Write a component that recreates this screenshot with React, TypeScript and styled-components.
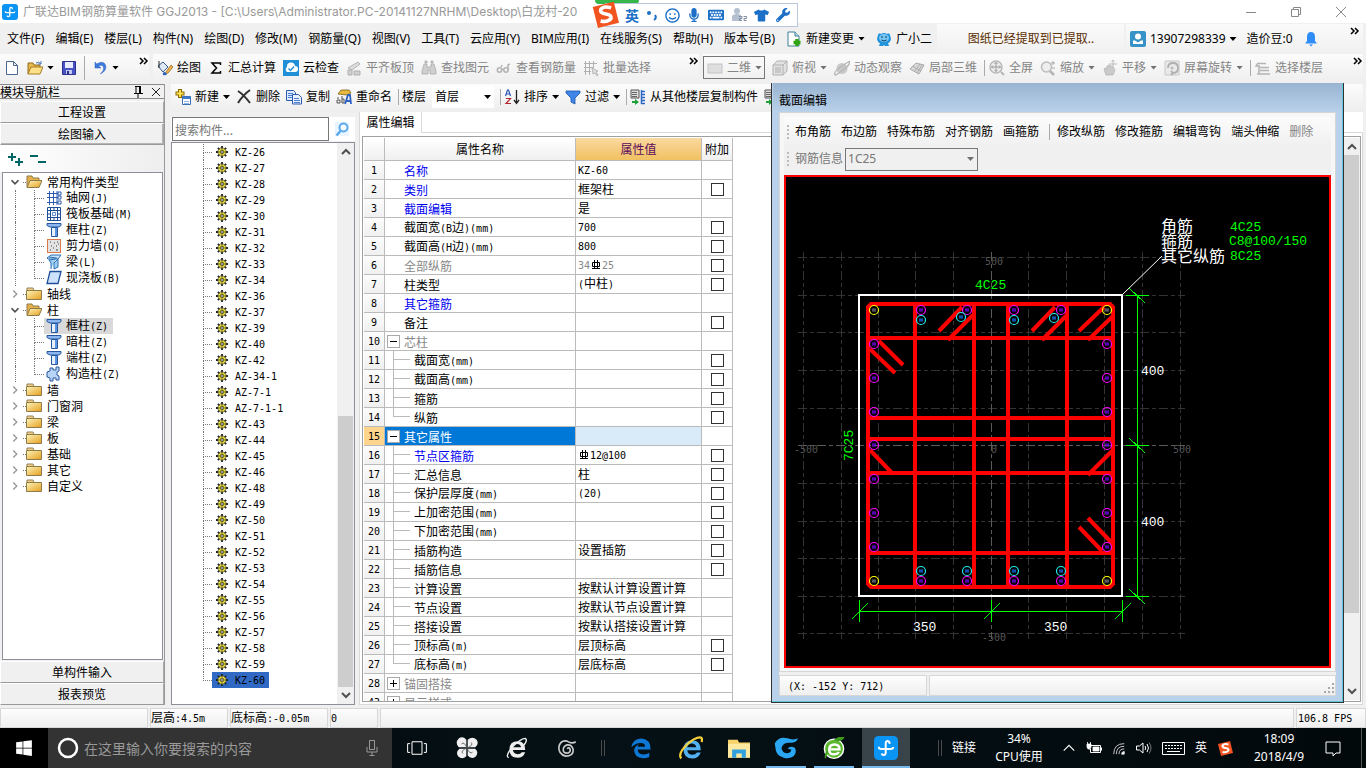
import React from 'react';
import styled, { createGlobalStyle, css } from 'styled-components';
import { FaKeyboard, FaMicrophone, FaRegSmile, FaTshirt, FaWindows, FaWrench } from 'react-icons/fa';

const GlobalStyle = createGlobalStyle`
  *, *::before, *::after { box-sizing: border-box; }
  body {
    margin: 0;
    background: #f0f0f0;
    color: #000;
    font: 12px/16px 'Noto Sans', 'Noto Sans CJK SC', sans-serif;
  }
  button, input, select {
    font: inherit;
    color: inherit;
    margin: 0;
    padding: 0;
    border: 0;
    border-radius: 0;
    background: none;
    outline: none;
  }
  svg { display: block; flex: none; }
  ul { list-style: none; margin: 0; padding: 0; }
`;

/* ---------- bitmap-style mixed text ---------- */

const SongText = styled.span`
  font: 12px/16px 'Noto Sans CJK SC', sans-serif;
  white-space: nowrap;
`;
const Half = styled.span`
  font: 10px/16px 'DejaVu Sans Mono', monospace;
  white-space: pre;
`;

function Song({ children }: { children: string }) {
  const parts = children.match(/[\x20-\x7e]+|[^\x20-\x7e]+/g) || [];
  return (
    <SongText>
      {parts.map((p, i) => (/^[\x20-\x7e]/.test(p) ? <Half key={i}>{p}</Half> : p))}
    </SongText>
  );
}

/* ---------- icons ---------- */

const shapes: Record<string, React.ReactNode> = {
  app: (
    <>
      <rect width="16" height="16" rx="3" fill="#0a95f5" />
      <path d="M10.500 5.200Q10.300 3.300 9 3.300 7.800 3.300 7.800 5v6q0 1.700-1.300 1.700-1.200 0-1.400-1M3.200 7.200q0 1.500 1.500 1.500h6.500q1.600 0 1.600-1.300" fill="none" stroke="#fff" strokeWidth="1.300" />
    </>
  ),
  fresh: <path d="M2.500 1.500h7l4 4v9h-11zM9.500 1.500v4h4" fill="#fff" stroke="#4a678f" />,
  open: (
    <>
      <path d="M1 14V3h5l1 2h6v3" fill="#e8b84b" stroke="#8f6a1c" />
      <path d="m1 14 3-7h12l-3 7z" fill="#ffdf87" stroke="#a67c22" />
      <path d="M9 3q3-2 5 1m0-3v3h-3" fill="none" stroke="#4b74b8" />
    </>
  ),
  save: (
    <>
      <path d="M1.500 1.500h13v13h-13z" fill="#4a53c4" stroke="#2b318c" />
      <path d="M4 2h8v6H4z" fill="#e9ecff" />
      <path d="M5 10h6v4H5z" fill="#c3c8ee" />
      <path d="M6 11h2v3H6z" fill="#2b318c" />
    </>
  ),
  undo: <path d="M3 2v6h6L6.500 6q4-2 5 1t-3 7q7-4 5-9T4.500 4z" fill="#3d7be0" stroke="#2a5bb5" strokeWidth=".5" />,
  draw: (
    <>
      <path d="m1 6 5-4 5 5-5 5z" fill="#dfe8f5" stroke="#3b5a86" />
      <path d="M2 1v7" stroke="#222" />
      <path d="M9 12 14 5l2 2-5 6-3 1z" fill="#f0b64e" stroke="#875c15" strokeWidth=".7" />
      <path d="M8 12q-3 0-2 3 3 1 4-1z" fill="#2f65c0" />
    </>
  ),
  sigma: <path d="M12.500 5V3H4l4.500 5L4 13h8.500v-2" fill="none" stroke="#000" strokeWidth="1.500" />,
  cloud: (
    <>
      <rect width="16" height="16" fill="#1f8fd8" />
      <path d="M4 12a3 3 0 0 1 0-5 4 4 0 0 1 8-1 3 3 0 0 1 0 6z" fill="#fff" />
      <path d="m5.500 8.500 2 2 3.500-4" fill="none" stroke="#1f8fd8" strokeWidth="1.400" />
    </>
  ),
  align: (
    <>
      <path d="m2 8 10-6 2 2-8 6z" fill="#dcdcdc" stroke="#b4b4b4" />
      <path d="M2 10h4v5H2zM8 11h6v4H8z" fill="#cfcfcf" stroke="#b0b0b0" />
    </>
  ),
  binoc: (
    <path d="M3 4h3v3h4V4h3l2 7v3H9v-4H7v4H1v-3zM4 1h2v2H4zM10 1h2v2h-2z" fill="#cfcfcf" stroke="#a5a5a5" strokeWidth=".7" />
  ),
  glasses: (
    <g fill="none" stroke="#b3b3b3" strokeWidth="1.500">
      <circle cx="3.500" cy="10" r="2.200" />
      <circle cx="10" cy="10" r="2.200" />
      <path d="M6 9.500h2M5 7l1-2M12 10V5l2-1" />
    </g>
  ),
  batch: (
    <>
      <path d="M2.500 1v14M6.500 1v14M10.500 1v7M1 3.500h13M1 7.500h9M1 11.500h7" stroke="#b0b0b0" fill="none" />
      <path d="m9 8 6 3-2 1 2 3-1 1-2-3-2 1z" fill="#ddd" stroke="#a5a5a5" strokeWidth=".7" />
    </>
  ),
  plane: <rect x="1" y="4" width="14" height="9" fill="#dedede" stroke="#c4c4c4" />,
  cube: (
    <>
      <path d="m1 5 4-4h10v10l-4 4H1z" fill="#e2e2e2" stroke="#b0b0b0" />
      <path d="M1 5h10v10M11 5l4-4" fill="none" stroke="#b0b0b0" />
      <path d="M3 7h6v6H3z" fill="#c8c8c8" />
    </>
  ),
  orbit: (
    <>
      <circle cx="8" cy="8.500" r="5.500" fill="#c9c9c9" />
      <path d="M1 15Q-1 12 8 6t7-4q2 2-6 8t-8 5z" fill="none" stroke="#b5b5b5" strokeWidth="1.300" />
    </>
  ),
  part3d: (
    <>
      <path d="m1 9 6-6 8 2-5 9z" fill="#d8d8d8" stroke="#aaa" />
      <path d="m5 12 6-8M3 6l9 5M8 13l5-8" stroke="#aaa" fill="none" />
    </>
  ),
  full: (
    <>
      <circle cx="7" cy="7" r="6" fill="#eee" stroke="#b9b9b9" strokeWidth="1.500" />
      <path d="M7 2.500v9M2.500 7h9M5.500 4 7 2.500 8.500 4M5.500 10 7 11.500 8.500 10M4 5.500 2.500 7 4 8.500M10 5.500 11.500 7 10 8.500" fill="none" stroke="#999" />
      <path d="m12 12 3 3" stroke="#b5b5b5" strokeWidth="2" />
    </>
  ),
  zoom: (
    <>
      <circle cx="6.500" cy="7" r="5" fill="#eee" stroke="#bcbcbc" strokeWidth="1.500" />
      <path d="m10 11 4 4" stroke="#b5b5b5" strokeWidth="2.500" />
      <path d="M11 3h4M13 1v4M12 8h3" stroke="#aaa" />
    </>
  ),
  pan: (
    <>
      <path d="M2 9q1-2 3 0V6l2-1 2 1 2 1 2 3-2 5H4z" fill="#cacaca" stroke="#b0b0b0" strokeWidth=".7" />
      <path d="M11 0v8M7 4h8M9.500 1.500 11 0l1.500 1.500" stroke="#bbb" fill="none" />
    </>
  ),
  rotate: (
    <>
      <path d="M1 1h14v14H1z" fill="#e9e9e9" stroke="#c9c9c9" />
      <path d="M4 8q0-5 5-5t5 5-5 5M7 11l2 2-2 2" fill="none" stroke="#b0b0b0" strokeWidth="1.800" />
      <circle cx="8" cy="8" r="1.500" fill="#bbb" />
    </>
  ),
  floors: <path d="M2 3.500h9M5 7.500h9M5 10.500h9M2 14h13M3 3l-2 3h4M4 6v8" fill="none" stroke="#b4b4b4" strokeWidth="1.500" />,
  change: (
    <>
      <path d="M2 1h7l4 4v10H2z" fill="#fff" stroke="#3f7f96" />
      <path d="M9 1v4h4" fill="#bfe3ef" stroke="#3f7f96" />
      <path d="M11 8v7M7.500 11.500h7" stroke="#2fa312" strokeWidth="3.500" />
    </>
  ),
  mascot: (
    <>
      <path d="M2 4q1-3 3-1 3-2 6 0 2-2 3 1l1 4q-1 4-3 4l1 3H9l-1-1-1 1H3l1-3q-2 0-3-4z" fill="#1f93dc" />
      <ellipse cx="8" cy="7" rx="5" ry="4" fill="#79c7f2" />
      <path d="M6 5v2M10 5v2M5.500 9q2.500 2 5 0" stroke="#083a66" fill="none" />
    </>
  ),
  user: (
    <>
      <rect width="16" height="16" rx="2" fill="#3792c7" />
      <circle cx="8" cy="5.500" r="3" fill="#fff" />
      <path d="M3 13V9.500h2l3 2 3-2h2V13z" fill="#fff" />
    </>
  ),
  bell: <path d="M8 1q4 0 4 5v4l2 2.500H2L4 10V6q0-5 4-5zM6 13.500h4L8 15.500z" fill="#2f8df5" />,
  create: (
    <>
      <path d="M5 0v9M.5 4.500h9" stroke="#8a6a00" strokeWidth="4" />
      <path d="M5 1v7M1.500 4.500h7" stroke="#ffe14d" strokeWidth="2" />
      <path d="M7.500 7.500h8v8h-8z" fill="#fff" stroke="#3d6fb5" />
      <path d="M8 8h7v2H8z" fill="#3d7bd6" />
      <path d="M9 12.500h5M9 14.500h5" stroke="#8db2e6" />
    </>
  ),
  cross: <path d="M2 2q6 4 12 12M14 1Q7 6 2 14" fill="none" stroke="#333" strokeWidth="2" />,
  copy: (
    <>
      <path d="M.5 1.500h7l2 2v8h-9z" fill="#dfeaff" stroke="#2d5cae" />
      <path d="M2 4.500h5M2 6.500h5M2 8.500h5" stroke="#4c7ed1" />
      <path d="M6.500 5.500h6l3 3v6.500h-9z" fill="#eaf1ff" stroke="#2d5cae" />
      <path d="M8 9.500h5M8 11.500h6M8 13.500h6" stroke="#4c7ed1" />
    </>
  ),
  rename: (
    <>
      <path d="m2 5 3-4h8l2 3-4 2z" fill="#e6ba3c" stroke="#80611a" strokeWidth=".8" />
      <path d="M1 11h3v3H1zM1 9h2M6 7v7h2v-4H6" fill="none" stroke="#555" />
      <path d="m9 15 3-9h2l1 9M10 12h5" fill="none" stroke="#2b62c4" strokeWidth="1.800" />
    </>
  ),
  sort: (
    <>
      <path d="m1.500 7 2-6h1l2 6M2 5h4" fill="none" stroke="#2b55b5" strokeWidth="1.200" />
      <path d="M2 9.500h4.500L2 14.500h5" fill="none" stroke="#b0282e" strokeWidth="1.200" />
      <path d="M12.500 1v12M10 11l2.500 3.500L15 11" fill="none" stroke="#222" strokeWidth="1.300" />
    </>
  ),
  filter: <path d="M1 2h14v2l-5 5v6l-4-2V9L1 4z" fill="#3f86e8" stroke="#1c54ab" strokeWidth=".8" />,
  copyFloor: (
    <>
      <path d="M1 1h8v8H1z" fill="#ddd" stroke="#555" />
      <path d="M2 3.500h5M2 5.500h5M2 7.500h5" stroke="#666" />
      <path d="M2 12h3v-2l4 3-4 3v-2H2z" fill="#1fa038" />
      <path d="M11.500 1v14M11 2.500h4M11 5.500h4M11 8.500h4M11 11.500h4M11 14.500h4" stroke="#2a66c8" strokeWidth="1.500" />
    </>
  ),
  search: (
    <>
      <rect x="1" y="1" width="14" height="14" fill="#e8f4ff" />
      <circle cx="9.500" cy="6.500" r="4" fill="#f4faff" stroke="#5aa9ea" strokeWidth="2" />
      <path d="m6.500 10-4 4.500" stroke="#5aa9ea" strokeWidth="2.500" />
    </>
  ),
  folder: (
    <>
      <path d="M1 4V2h6l1 2" fill="#f3cf7c" stroke="#8f8167" />
      <path d="M.5 4.500h15v9H.5z" fill="url(#gold)" stroke="#8f7a4a" />
    </>
  ),
  folderOpen: (
    <>
      <path d="M1 13V2h5l1 2h6v3" fill="#e6b04a" stroke="#8f7a4a" />
      <path d="m1 13.500 3-7h12l-3 7z" fill="url(#gold)" stroke="#8f7a4a" />
    </>
  ),
  grid: (
    <>
      <path d="M3.500 1v14M7.500 1v14M1 3.500h12M1 7.500h12M1 12.500h12M11 1v14" stroke="#2d5cae" fill="none" />
      <path d="M12 2h3v3h-3zM12 6h3v3h-3zM12 11h3v3h-3z" fill="#fff" stroke="#2d5cae" />
    </>
  ),
  raft: (
    <>
      <path d="M1.500 1.500h13v13h-13z" fill="#fff" stroke="#1c4f96" />
      <path d="M4.500 4.500h7v7h-7zM4.500 1v14M11.500 1v14M1 4.500h14M1 11.500h14M8 1v3M8 12v3M1 8h3M12 8h3" stroke="#1c4f96" fill="none" />
      <path d="M6.500 6.500h3v3h-3z" fill="#fff" stroke="#5c8bd0" />
    </>
  ),
  column: (
    <>
      <path d="M1 1.500h14v2l-2 1.500H4L1 3.500z" fill="#8eb6ee" stroke="#27569f" />
      <path d="M5.500 5.500h6v9h-6z" fill="#e6f0fd" stroke="#27569f" />
      <path d="M9 6h2v8H9z" fill="#5c94e2" />
    </>
  ),
  wall: (
    <>
      <path d="M1 1.500h14M1 14.500h14M1.500 1v14M14.500 1v14" stroke="#d9794a" />
      <path d="M2 2h12v12H2z" fill="#e4e4e4" />
      <path d="M4 4h1M8 5h1M11 4h1M5 8h1M10 8h1M7 10h1M4 12h1M10 12h2M12 6h1" stroke="#444" />
    </>
  ),
  beam: (
    <>
      <path d="m1 4 4-3h10l-3 4H2z" fill="#cfe7fb" stroke="#2b6fb5" />
      <path d="M5 15V9L3 6l7-1M8 15V9l4-4v8zM3 3l8 1" fill="#9dcdf3" stroke="#2b6fb5" />
    </>
  ),
  slab: <path d="M4 1.500h11l-3 12H1z" fill="#cfe2fd" stroke="#1f4f9c" strokeWidth="1.300" />,
  structural: <path d="M4 5V2h3v2h3V1h3v4l-2 1v3l2 1v4h-3v-2H7v3H4v-3L1 11V6z" fill="#b8d5f7" stroke="#27569f" />,
  gear: (
    <>
      <path d="M8 0v16M0 8h16M2.500 2.500l11 11M13.500 2.500l-11 11" stroke="#222" strokeWidth="2.500" />
      <circle cx="8" cy="8" r="5.500" fill="#f4e62e" stroke="#444" strokeWidth="1" />
      <path d="M8 3v2M8 11v2M3 8h2M11 8h2M5 5l1 1M10 10l1 1M11 5l-1 1M5 11l1-1" stroke="#333" strokeWidth="1.200" />
      <circle cx="8" cy="8" r="1.800" fill="#fff" stroke="#222" strokeWidth="1.200" />
    </>
  ),
  pluses: <path d="M5 2v8M1 6h8M12 7v8M8 11h8" stroke="#066" strokeWidth="2" fill="none" />,
  minuses: <path d="M0 5h8M8 11h8" stroke="#066" strokeWidth="2" />,
  pin: <path d="M5 2.500h6M6 2v7M9.500 2v7M10.500 2v7M4 9.500h9M8 10v4" stroke="#000" fill="none" />,
  close: <path d="m4 4 8 8M12 4l-8 8" stroke="#222" fill="none" />,
  up: <path d="m4 10 4-4 4 4" stroke="#505050" strokeWidth="2" fill="none" />,
  down: <path d="m4 6 4 4 4-4" stroke="#505050" strokeWidth="2" fill="none" />,
  right: <path d="m6 4 4 4-4 4" stroke="#a0a0a0" strokeWidth="1.800" fill="none" />,
  person: (
    <>
      <circle cx="6" cy="4" r="3" fill="#b4bfd0" />
      <path d="M1 14V10q0-3 5-3 3 0 4 1v6z" fill="#b4bfd0" />
      <path d="M8 9.500h3v2H8.500v2H11M12.500 9.500h3v2H13v2h2.500" fill="none" stroke="#7e8ca3" />
    </>
  ),
  sogou: (
    <>
      <path d="m1 4 12-3 3 12-12 3z" fill="#f2541f" />
      <path d="M11.500 4.500Q7 3 5.500 5.500 5 7.500 8.500 8q3.500.5 3 2.500Q9.500 13 5.500 12" fill="none" stroke="#fff" strokeWidth="2" />
    </>
  ),
  taskview: <path d="M4 3h8v10H4zM2.500 4.500H.5v7h2M13.500 4.500h2v7h-2" fill="none" stroke="#fff" strokeWidth=".8" />,
  pinwheel: (
    <g fill="#f0f0f0">
      <path d="M7.500 7.500H2Q-1 4 2 1q3-2 5.500 1zM8.500 7.500V2Q12-1 15 2q2 3-1 5.500zM8.500 8.500H14q3 3 0 6-3 2-5.500-1zM7.500 8.500V14q-3 3-6 0-2-3 1-5.500z" />
      <path d="M4 5q2-2 4 3M11 4q2 2-3 4M12 11q-2 2-4-3M5 12q-2-2 3-4" stroke="#555" strokeWidth=".6" fill="none" />
    </g>
  ),
  browser: (
    <>
      <path d="M14 9.500H5q.5 3 3.500 3 2 0 3-1.500h2.500q-1.500 4-5.500 4-6 0-6-6 0-6 6-6 5.500 0 5.500 6.500zM5 7.500h6Q10.500 5 8 5T5 7.500z" fill="#eee" />
      <path d="M2 15q-3-1 3-8 6-6 9-6 2 1-1 5" fill="none" stroke="#eee" />
    </>
  ),
  ie: (
    <>
      <path d="M14.500 9.500H5.500q.5 3 3.500 3 2 0 3-1.500h2.500q-1.500 4-5.500 4-6 0-6-6 0-6 6-6 5.500 0 5.500 6.500zM5.500 7.500h6Q11 5 8.500 5t-3 2.500z" fill="#53b1f0" />
      <path d="M1.500 15Q-1 12 5 6q6-5.500 9.500-5 1.500 1 .5 3" fill="none" stroke="#f3cf3a" strokeWidth="1.500" />
    </>
  ),
  edge: (
    <path
      d="M1 7.500Q2 1 8.500 1 15 1.500 15 9H5.500q.5 3.700 4.500 3.700 2.500 0 4-1.200v3Q12 15.500 9.500 15.500 3 15 3 9.500 3.500 6.500 6.500 5 5.500 6 5.500 7H11Q11 4.300 8 4.300 4 4.300 1 7.500z"
      fill="#0f78d4"
    />
  ),
  swirl: <path d="M15 3Q12 5 8 2.500 3 1.500 1.500 7 1 13 7 14.500q6 0 6-5Q12 5 8 5.500q-3 1-3 4t4 2.500q2-1 1.500-3T8 8.500" fill="none" stroke="#ccc" strokeWidth="1.300" />,
  files: (
    <>
      <path d="M0 2h7l1 2h8v11H0z" fill="#f8d36b" />
      <path d="M0 5h16v10H0z" fill="#fde9a0" />
      <path d="M3 15V9h10v6h-3v-3H6v3z" fill="#32a0dc" />
    </>
  ),
  swirlBlue: (
    <path
      d="M16 1.500Q15 4.500 11 4.500 6 4 5 8q.5 3.500 4 3.500 2.500-.5 2.500-2.500L9 8.500Q11 6 14 8q1.500 3-1 5.500-3 2-6.500 1Q1 13 1 8L.5 5Q3 0 9 1.500q4 1.500 7 0z"
      fill="#2aa6f2"
    />
  ),
  greenE: (
    <>
      <circle cx="8" cy="8.500" r="7" fill="#5cb82f" stroke="#fff" />
      <path d="M9 2q4-3 6-1.500-2 3-6 1.500zM2 15.500q-1-3 2-6" fill="#3f9a1c" stroke="#3f9a1c" />
      <path d="M5 9h7q0-3.500-3.700-3.500T4.500 9.200 8.300 12.500q2.300 0 3.300-1.500" fill="none" stroke="#fff" strokeWidth="1.800" />
    </>
  ),
  plug: (
    <>
      <path d="M5 5.500h9.500v7H4.500V9M15.500 7.500v3" fill="none" stroke="#fff" />
      <path d="M7 7h6v4H7zM1 4h4v3L4 9H2L1 7zM1.500 2v2M4.500 2v2" fill="#fff" stroke="#fff" strokeWidth=".8" />
    </>
  ),
  wifi: (
    <g fill="none" stroke="#ddd">
      <path d="M2 15Q2 3 14 3M5 15q0-9 9-9M8 15q0-6 6-6" />
      <path d="M11 15q0-3 3-3v3z" fill="#fff" />
    </g>
  ),
  speaker: (
    <g fill="none" stroke="#fff">
      <path d="M.5 6h3L7 3v10L3.500 10h-3z" />
      <path d="M9 6q1.500 2 0 4M11 4q3 4 0 8" />
      <path d="M13 2.500q4 5.500 0 11" stroke="#777" />
    </g>
  ),
  note: <path d="M1 2h14v11h-4l-3 3v-3H1z" fill="none" stroke="#fff" />,
  chevUp: <path d="m2 11 6-6 6 6" fill="none" stroke="#fff" strokeWidth="1.300" />,
};

function Icon({ name, size = 16 }: { name: string; size?: number }) {
  return (
    <svg width={size} height={size} viewBox="0 0 16 16" aria-hidden="true">
      {shapes[name]}
    </svg>
  );
}

const Caret = styled.span<{ $dim?: boolean }>`
  flex: none;
  width: 7px;
  height: 4px;
  background: ${(p) => (p.$dim ? '#707070' : '#000')};
  clip-path: polygon(0 0, 100% 0, 50% 100%);
`;

function More() {
  return (
    <svg width="10" height="8" viewBox="0 0 10 8" aria-hidden="true">
      <path d="m1 1 3 3-3 3M5 1l3 3-3 3" fill="none" stroke="#000" strokeWidth="1.500" />
    </svg>
  );
}

/* ---------- window chrome ---------- */

const Page = styled.div`
  display: flex;
  flex-direction: column;
  height: 100vh;
  min-height: 760px;
  overflow: hidden;
  position: relative;
`;
const TitleBar = styled.header`
  flex: none;
  display: flex;
  align-items: center;
  height: 23px;
  padding: 0 17px 0 2px;
  gap: 5px;
  background: #fff;
  color: #999;
`;
const WindowTitle = styled.span`
  font-family: Inter, 'Noto Sans CJK SC', sans-serif;
  white-space: nowrap;
`;
const WindowButtons = styled.div`
  display: flex;
  gap: 29px;
  margin-left: auto;
`;
const PlainButton = styled.button`
  display: flex;
  align-items: center;
`;

const MenuBar = styled.nav`
  flex: none;
  display: flex;
  height: 31px;
  gap: 2px;
  padding-right: 3px;
`;
const MenuItems = styled.div`
  display: flex;
  align-items: center;
  gap: 11px;
  padding-left: 7px;
  width: 935px;
  white-space: nowrap;
`;
const MenuBand = styled.div<{ $grow?: boolean }>`
  display: flex;
  align-items: center;
  justify-content: ${(p) => (p.$grow ? 'flex-start' : 'center')};
  flex: ${(p) => (p.$grow ? '1' : '0 0 187px')};
  gap: 10px;
  margin-top: 1px;
  padding: 0 3px 0 4px;
  white-space: nowrap;
  background: linear-gradient(#fafafa, #f0f0f0);
`;
const Notice = styled.a`
  color: #5a2d00;
  text-decoration: none;
`;
const MoreButton = styled.button`
  align-self: flex-start;
  margin: 3px 0 0 auto;
`;

const ToolBar = styled.div`
  flex: none;
  display: flex;
  height: 29px;
  gap: 4px;
  padding-right: 3px;
`;
const ToolSection = styled.div<{ $w?: number; $tight?: boolean; $flush?: boolean }>`
  display: flex;
  align-items: center;
  gap: ${(p) => (p.$tight ? 6 : 7)}px;
  flex: ${(p) => (p.$w ? `0 0 ${p.$w}px` : '1')};
  padding: 0 0 2px ${(p) => (p.$flush ? 0 : 4)}px;
  white-space: nowrap;
  background: linear-gradient(#fcfcfc, #eee);
`;
const ToolButton = styled.button<{ $dim?: boolean }>`
  display: flex;
  align-items: center;
  gap: 4px;
  white-space: nowrap;
  color: ${(p) => (p.$dim ? '#858585' : '#000')};
`;
const Separator = styled.span<{ $tall?: boolean }>`
  flex: none;
  width: 1px;
  height: ${(p) => (p.$tall ? 24 : 16)}px;
  margin-right: ${(p) => (p.$tall ? 0 : -3)}px;
  background: #aaa;
`;
const ViewCombo = styled(ToolButton)`
  width: 62px;
  height: 23px;
  padding: 0 3px;
  border: 1px solid #777;
`;

/* ---------- left navigation ---------- */

const Main = styled.main`
  flex: 1;
  min-height: 0;
  display: flex;
  gap: 6px;
  padding: 1px 3px 3px 0;
`;
const NavPanel = styled.aside`
  flex: none;
  width: 165px;
  display: flex;
  flex-direction: column;
  border-right: 1px solid #999;
`;
const NavHeader = styled.div`
  display: flex;
  align-items: center;
  height: 15px;
  border: 1px solid #8a8a8a;
  border-width: 1px 0;
  margin-bottom: 2px;
`;
const NavTools = styled.div`
  display: flex;
  gap: 2px;
  margin-left: auto;
`;
const NavButton = styled.button<{ $on?: boolean }>`
  height: 22px;
  text-align: center;
  background: #f0f0f0;
  border: 1px solid;
  border-color: #fff #a8a8a8 #999 #fff;
  ${(p) => p.$on && css`box-shadow: inset -1px -1px #b5b5b5;`}
`;
const NavStrip = styled.div`
  display: flex;
  align-items: center;
  gap: 7px;
  height: 27px;
  padding-left: 7px;
  background: linear-gradient(90deg, #fff, #eee);
`;
const Tree = styled.ul`
  flex: 1;
  min-height: 0;
  overflow: hidden;
  margin: 0 1px 1px 2px;
  padding: 1px 0 0 5px;
  border: 1px solid #8a8f98;
  background: #fff;
`;
const TreeRow = styled.li`
  display: flex;
  align-items: center;
  height: 16px;
`;
const Dots = styled.span`
  width: 3px;
  margin-left: 1px;
  border-top: 1px dotted #777;
`;
const RootLabel = styled.span`
  display: flex;
  gap: 5px;
`;
const RootGuide = styled.span`
  width: 19px;
  height: 16px;
  margin-left: 7px;
  border-left: 1px dotted #777;
`;
const Elbow = styled.span<{ $w: number; $last?: boolean }>`
  flex: none;
  display: grid;
  grid-template-rows: 9px 1fr;
  width: ${(p) => p.$w}px;
  height: 100%;
  &::before {
    content: '';
    border: 0 dotted #777;
    border-width: 0 0 1px 1px;
  }
  &::after {
    content: '';
    border: 0 dotted #777;
    border-left-width: ${(p) => (p.$last ? 0 : 1)}px;
  }
`;
const Leaf = styled.span<{ $on?: boolean }>`
  display: flex;
  align-items: center;
  gap: 4px;
  height: 16px;
  padding: 0 5px 0 2px;
  background: ${(p) => (p.$on ? '#d9d9d9' : 'none')};
`;

/* ---------- component list ---------- */

const Workspace = styled.section`
  flex: 1;
  min-width: 0;
  display: flex;
  flex-direction: column;
`;
const ComponentBar = styled(ToolBar)`
  height: 28px;
  gap: 0;
  padding: 0;
`;
const FloorSelect = styled.span`
  display: flex;
  align-items: center;
  width: 62px;
  height: 22px;
  padding: 0 3px;
  background: #fff;
`;
const BareSelect = styled.select`
  flex: 1;
  min-width: 0;
  appearance: none;
  opacity: 1;
`;
const Panels = styled.div`
  flex: 1;
  min-height: 0;
  display: flex;
  gap: 4px;
`;
const ListPanel = styled.div`
  flex: none;
  width: 184px;
  display: flex;
  flex-direction: column;
  padding-top: 5px;
`;
const SearchRow = styled.div`
  display: flex;
  align-items: center;
  gap: 5px;
  height: 24px;
  margin-bottom: 1px;
  padding-left: 1px;
  background: #fff;
`;
const SearchInput = styled.input`
  width: 157px;
  height: 24px;
  padding: 0 2px;
  border: 1px solid #777;
  background: #fff;
  font: 12px/16px 'Noto Sans CJK SC', sans-serif;
  &::placeholder {
    color: #777;
    opacity: 1;
  }
`;
const ListBox = styled.div`
  flex: 1;
  min-height: 0;
  display: flex;
  border: 1px solid #8a8f98;
  background: #fff;
`;
const ListItems = styled.ul`
  flex: 1;
  overflow: hidden;
  padding: 1px 0 0 31px;
`;
const ListLeaf = styled(Leaf)`
  gap: 7px;
  padding: 0 4px;
  background: ${(p) => (p.$on ? '#316ac5' : 'none')};
`;
const Scrollbar = styled.div`
  flex: none;
  display: flex;
  flex-direction: column;
  width: 17px;
  padding: 1px;
  background: #f0f0f0;
`;
const ScrollSpace = styled.span<{ $flex: number; $thumb?: boolean }>`
  flex: ${(p) => p.$flex} 0 0;
  background: ${(p) => (p.$thumb ? '#cdcdcd' : 'none')};
`;

/* ---------- property editor ---------- */

const Editor = styled.div`
  flex: 1;
  min-width: 0;
  display: flex;
  flex-direction: column;
`;
const TabStrip = styled.div`
  display: flex;
  height: 21px;
  background: #fff;
`;
const Tab = styled.button`
  width: 63px;
  border: 1px solid #d9d9d9;
  border-width: 0 1px 0 1px;
`;
const TabRest = styled.span`
  flex: 1;
  border-bottom: 1px solid #d9d9d9;
`;
const EditorBody = styled.div`
  flex: 1;
  min-height: 0;
  display: flex;
  padding: 3px 1px 2px 2px;
  border: 1px solid #d9d9d9;
  border-top: 0;
  background: #fff;
`;
const EditorFrame = styled.div`
  flex: 1;
  min-width: 0;
  display: flex;
  justify-content: space-between;
  overflow: hidden;
  padding: 1px 0 1px 1px;
  border: 1px solid #a0a0a0;
`;
const Table = styled.table`
  align-self: flex-start;
  table-layout: fixed;
  width: 369px;
  border-spacing: 0;
`;
const Th = styled.th<{ $w: number; $on?: boolean }>`
  width: ${(p) => p.$w}px;
  height: 23px;
  padding: 0;
  font-weight: 400;
  border: 0 solid #bbb;
  border-width: 0 1px 1px 0;
  color: ${(p) => (p.$on ? '#5c0a5c' : '#000')};
  background: ${(p) => (p.$on ? 'linear-gradient(#fad9a0, #f1c161)' : 'linear-gradient(#fff, #f0f0f0)')};
`;
const Td = styled.td<{ $bg?: string; $center?: boolean }>`
  height: 19px;
  padding: 0;
  text-align: ${(p) => (p.$center ? 'center' : 'left')};
  line-height: 16px;
  border: 0 solid #bbb;
  border-width: 0 1px 1px 0;
  background: ${(p) => p.$bg || '#fff'};
`;
const NameCell = styled.div<{ $tone?: string }>`
  display: flex;
  align-items: center;
  height: 18px;
  padding-left: 2px;
  color: ${(p) => p.$tone || '#000'};
`;
const NameText = styled.span`
  padding-top: 2px;
  line-height: 16px;
`;
const Toggle = styled.button`
  width: 13px;
  height: 13px;
  margin-right: 4px;
  border: 1px solid #aaa;
  background: #fff;
  color: #000;
`;
const Indent = styled.span`
  width: 17px;
`;
const Branch = styled(Elbow)`
  margin: 0 4px 0 6px;
  height: 19px;
  &::before, &::after {
    border-style: solid;
    border-color: #bbb;
  }
`;
const ValueCell = styled.div<{ $dim?: boolean }>`
  display: flex;
  align-items: center;
  height: 18px;
  padding-left: 2px;
  color: ${(p) => (p.$dim ? '#888' : '#000')};
`;
const Check = styled.input`
  appearance: none;
  display: block;
  width: 13px;
  height: 13px;
  margin: 0 auto;
  border: 1px solid #333;
  background: #fff;
`;

/* ---------- section dialog ---------- */

const Dialog = styled.section`
  position: absolute;
  top: 83px;
  right: 22px;
  width: 573px;
  height: 620px;
  display: flex;
  flex-direction: column;
  padding: 0 7px 6px;
  border: 1px solid #333;
  border-top: 0;
  background: #b9d1ea;
  box-shadow: inset -1px -1px #5fc8dc;
`;
const DialogTitle = styled.h2`
  flex: none;
  margin: 0 -6px;
  padding: 9px 6px 4px;
  font: 12px/16px 'Noto Sans CJK SC', sans-serif;
  background: linear-gradient(#99b4d1, #b9d1ea);
`;
const DialogBody = styled.div`
  flex: 1;
  min-height: 0;
  display: flex;
  flex-direction: column;
  padding: 4px 4px 3px;
  border: 1px solid #d5d5d5;
  background: #f7f7f7;
`;
const DialogBar = styled.div`
  flex: none;
  display: flex;
  align-items: center;
  gap: 10px;
  height: 29px;
  padding-left: 3px;
  white-space: nowrap;
  background: linear-gradient(#fcfcfc, #f0f0f0);
`;
const DialogInfo = styled(DialogBar)`
  gap: 0;
  padding-bottom: 3px;
  color: #777;
  background: #f0f0f0;
`;
const Grip = styled.span`
  width: 2px;
  height: 14px;
  margin-right: -4px;
  background: repeating-linear-gradient(#bbb 0 2px, transparent 2px 4px);
`;
const InfoLabel = styled.label`
  padding: 0 2px 0 10px;
`;
const InfoCombo = styled.span`
  display: flex;
  align-items: center;
  width: 133px;
  height: 23px;
  padding: 0 3px 0 2px;
  border: 1px solid #777;
`;
const CanvasFrame = styled.div`
  flex: 1;
  min-height: 0;
  border: 2px solid #f00;
  background: #000;
  overflow: hidden;
`;
const DialogStatus = styled.div`
  flex: none;
  display: flex;
  gap: 2px;
  height: 24px;
  padding-top: 3px;
  background: #f0f0f0;
`;
const StatusCell = styled.div<{ $w?: number; $pad?: number }>`
  flex: ${(p) => (p.$w ? `0 0 ${p.$w}px` : '1')};
  display: flex;
  align-items: center;
  padding-left: ${(p) => p.$pad || 0}px;
  border: 1px solid #d7d7d7;
  background: linear-gradient(#fdfdfd, #efefef);
`;
const ResizeGrip = styled.svg`
  align-self: flex-end;
  margin-left: auto;
`;

/* ---------- bottom bars ---------- */

const StatusBar = styled.footer`
  flex: none;
  display: flex;
  gap: 2px;
  height: 20px;
`;
const TaskBar = styled.footer`
  flex: none;
  display: flex;
  height: 40px;
  color: #fff;
  background: linear-gradient(90deg, #02090b, #051116 45%, #02090b);
`;
const StartButton = styled.button`
  width: 48px;
  display: grid;
  place-items: center;
  background: #000;
`;
const TaskSearch = styled.label`
  display: flex;
  align-items: center;
  gap: 5px;
  width: 344px;
  padding: 0 14px 0 9px;
  background: #333;
  color: #999;
`;
const TaskInput = styled.input`
  flex: 1;
  min-width: 0;
  font: 14px/20px 'Noto Sans CJK SC', sans-serif;
  &::placeholder {
    color: #999;
    opacity: 1;
  }
`;
const TaskTile = styled.button<{ $w?: number; $open?: boolean; $on?: boolean }>`
  display: grid;
  place-items: center;
  width: ${(p) => p.$w || 50}px;
  background: ${(p) => (p.$on ? '#39444a' : 'none')};
  ${(p) => p.$open && css`
    border-bottom: 2px solid #76b9ed;
    padding-top: 2px;
  `}
`;
const OpenTiles = styled.div`
  display: flex;
  gap: 8px;
  padding-left: 2px;
`;
const Rule = styled.span`
  width: 4px;
  height: 16px;
  margin: auto 0;
  border: 1px solid #4a4a4a;
  border-width: 0 1px;
`;
const Tray = styled.div`
  display: flex;
  align-items: center;
  margin-left: auto;
  gap: 10px;
  padding-right: 4px;
  white-space: nowrap;
`;
const TrayText = styled.span<{ $w?: number }>`
  width: ${(p) => (p.$w ? `${p.$w}px` : 'auto')};
  text-align: center;
  line-height: 18px;
  white-space: pre;
`;
const DesktopEdge = styled.span`
  width: 1px;
  height: 40px;
  margin-left: 10px;
  background: #555;
`;

/* ---------- floating input-method bar ---------- */

const ImeBar = styled.div`
  position: absolute;
  top: 3px;
  left: 605px;
  display: flex;
  align-items: center;
  gap: 7px;
  width: 193px;
  height: 24px;
  padding-left: 19px;
  border: 1px solid #b9c6dc;
  background: #fff;
  color: #1c70c8;
`;
const ImeLogo = styled.span`
  position: absolute;
  top: -4px;
  left: -15px;
`;
const ImeText = styled.b`
  font: 700 14px/16px 'Noto Sans CJK SC', sans-serif;
`;
const GreenBall = styled.span`
  position: absolute;
  top: 0;
  left: 595px;
  width: 44px;
  height: 4px;
  border-radius: 0 0 20px 20px;
  background: #35b54a;
`;

/* ---------- data ---------- */

const menus = [
  '文件(F)', '编辑(E)', '楼层(L)', '构件(N)', '绘图(D)', '修改(M)', '钢筋量(Q)', '视图(V)',
  '工具(T)', '云应用(Y)', 'BIM应用(I)', '在线服务(S)', '帮助(H)', '版本号(B)',
];

type Node = { label: string; icon?: string; open?: boolean; kids?: [string, string, boolean?][] };
const tree: Node[] = [
  {
    label: '常用构件类型',
    open: true,
    kids: [
      ['轴网(J)', 'grid'], ['筏板基础(M)', 'raft'], ['框柱(Z)', 'column'],
      ['剪力墙(Q)', 'wall'], ['梁(L)', 'beam'], ['现浇板(B)', 'slab'],
    ],
  },
  { label: '轴线' },
  {
    label: '柱',
    open: true,
    kids: [['框柱(Z)', 'column', true], ['暗柱(Z)', 'column'], ['端柱(Z)', 'column'], ['构造柱(Z)', 'structural']],
  },
  { label: '墙' }, { label: '门窗洞' }, { label: '梁' }, { label: '板' },
  { label: '基础' }, { label: '其它' }, { label: '自定义' },
];

const components = (
  'KZ-26 KZ-27 KZ-28 KZ-29 KZ-30 KZ-31 KZ-32 KZ-33 KZ-34 KZ-36 KZ-37 KZ-39 KZ-40 KZ-42 AZ-34-1 AZ-7-1 AZ-7-1-1 ' +
  'KZ-43 KZ-44 KZ-45 KZ-46 KZ-48 KZ-49 KZ-50 KZ-51 KZ-52 KZ-53 KZ-54 KZ-55 KZ-56 KZ-57 KZ-58 KZ-59 KZ-60'
).split(' ');

type Prop = { n: number; name: string; value?: string; check?: boolean; tone?: string; kind?: 'open' | 'shut' | 'kid' | 'last' };
const BLUE = '#0000f0';
const GREY = '#888';
const props: Prop[] = [
  { n: 1, name: '名称', value: 'KZ-60', tone: BLUE },
  { n: 2, name: '类别', value: '框架柱', tone: BLUE, check: true },
  { n: 3, name: '截面编辑', value: '是', tone: BLUE },
  { n: 4, name: '截面宽(B边)(mm)', value: '700', check: true },
  { n: 5, name: '截面高(H边)(mm)', value: '800', check: true },
  { n: 6, name: '全部纵筋', value: '34#25', tone: GREY, check: true },
  { n: 7, name: '柱类型', value: '(中柱)', check: true },
  { n: 8, name: '其它箍筋', tone: BLUE },
  { n: 9, name: '备注', check: true },
  { n: 10, name: '芯柱', tone: GREY, kind: 'open' },
  { n: 11, name: '截面宽(mm)', check: true, kind: 'kid' },
  { n: 12, name: '截面高(mm)', check: true, kind: 'kid' },
  { n: 13, name: '箍筋', check: true, kind: 'kid' },
  { n: 14, name: '纵筋', check: true, kind: 'last' },
  { n: 15, name: '其它属性', tone: '#fff', kind: 'open' },
  { n: 16, name: '节点区箍筋', value: '#12@100', tone: BLUE, check: true, kind: 'kid' },
  { n: 17, name: '汇总信息', value: '柱', check: true, kind: 'kid' },
  { n: 18, name: '保护层厚度(mm)', value: '(20)', check: true, kind: 'kid' },
  { n: 19, name: '上加密范围(mm)', check: true, kind: 'kid' },
  { n: 20, name: '下加密范围(mm)', check: true, kind: 'kid' },
  { n: 21, name: '插筋构造', value: '设置插筋', check: true, kind: 'kid' },
  { n: 22, name: '插筋信息', check: true, kind: 'kid' },
  { n: 23, name: '计算设置', value: '按默认计算设置计算', kind: 'kid' },
  { n: 24, name: '节点设置', value: '按默认节点设置计算', kind: 'kid' },
  { n: 25, name: '搭接设置', value: '按默认搭接设置计算', kind: 'kid' },
  { n: 26, name: '顶标高(m)', value: '层顶标高', check: true, kind: 'kid' },
  { n: 27, name: '底标高(m)', value: '层底标高', check: true, kind: 'last' },
  { n: 28, name: '锚固搭接', tone: GREY, kind: 'shut' },
  { n: 43, name: '显示样式', tone: GREY, kind: 'shut' },
];

/* Steel grade mark that precedes a bar diameter. */
function GradeMark() {
  return (
    <svg width="12" height="12" viewBox="0 0 12 12" aria-label="三级钢">
      <path d="M2.500 3.500h7v4h-7zM4.500 1v9M7.500 1v9M2 9.500h8" fill="none" stroke="#000" />
    </svg>
  );
}

function Value({ text }: { text: string }) {
  const [before, after] = text.split('#');
  if (after === undefined) return <Song>{text}</Song>;
  return (
    <>
      {before && <Song>{before}</Song>}
      <GradeMark />
      <Song>{after}</Song>
    </>
  );
}

/* ---------- section drawing ---------- */

const gridX = [803, 841, 878, 915, 953, 1028, 1066, 1104, 1142, 1180];
const gridY = [257, 295, 332, 370, 408, 483, 521, 558, 596, 633];
const barX = [921, 967, 1014, 1061];
const sideY = [344, 378, 412, 445, 479, 513, 547];
const hooks = [
  [962, 307, 939, 331], [973, 315, 948, 340], [1055, 307, 1032, 331], [1066, 316, 1042, 340],
  [1104, 307, 1079, 331], [1112, 317, 1088, 340], [879, 341, 903, 365], [870, 349, 895, 373],
  [870, 450, 893, 474], [1112, 451, 1088, 475], [1088, 518, 1112, 543], [1079, 527, 1102, 551],
];

function Bar({ x, y, c }: { x: number; y: number; c: string }) {
  return (
    <g>
      <circle cx={x} cy={y} r="4.500" fill="none" stroke={c} strokeWidth="1.200" />
      <rect x={x - 2} y={y - 1.5} width="4" height="3" fill={c} opacity=".55" />
      <path d={`M${x - 1} ${y - 1.5}v3M${x + 1} ${y - 1.5}v3`} stroke="#00f" strokeWidth=".8" />
    </g>
  );
}

const mono = "'Liberation Mono', monospace";
const cjk = "'Noto Sans CJK SC', sans-serif";

function SectionDrawing() {
  return (
    <svg width="543" height="489" viewBox="786 177 543 489">
      <g stroke="#333" strokeDasharray="9 3 4 3" shapeRendering="crispEdges">
        {gridX.map((x) => <path key={x} d={`M${x + 0.5} 252V639`} />)}
        {gridY.map((y) => <path key={y} d={`M798 ${y + 0.5}H1185`} />)}
        <path d="M991.500 252V639M798 445.500H1185" stroke="#5a5a5a" />
      </g>
      <g fill="#555" fontFamily="'DejaVu Sans Mono', monospace" fontSize="10">
        <text x="985" y="265">500</text>
        <text x="794" y="453">-500</text>
        <text x="991" y="453">0</text>
        <text x="1173" y="453">500</text>
        <text x="982" y="641">-500</text>
      </g>
      <rect x="859" y="295" width="263" height="301" fill="none" stroke="#fff" strokeWidth="2" />
      <path d="M1122 295 1162 256" stroke="#fff" />
      <g fill="none" stroke="#f00" strokeWidth="4">
        <path d="M871 304H1110L1113 307V584L1110 587H871L868 584V307Z" />
        <path d="M915 304V587M974 304V587M1008 304V587M1067 304V587" />
        <path d="M868 338H1113M868 418H1113M868 439H1113M868 473H1113M868 553H1113" />
        {hooks.map(([a, b, c, d]) => <path key={`${a}-${b}`} d={`M${a} ${b}L${c} ${d}`} />)}
      </g>
      {[874, 1107].map((x) => [310, 581].map((y) => <Bar key={`${x}${y}`} x={x} y={y} c="#ff0" />))}
      {barX.map((x) => (
        <g key={x}>
          <Bar x={x} y={310} c="#f0f" />
          <Bar x={x} y={581} c="#f0f" />
          <Bar x={x} y={571} c="#2ee" />
        </g>
      ))}
      {[[921, 320], [961, 317], [1014, 320], [1054, 318]].map(([x, y]) => <Bar key={x} x={x} y={y} c="#2ee" />)}
      {sideY.map((y) => (
        <g key={y}>
          <Bar x={874} y={y} c="#f0f" />
          <Bar x={1107} y={y} c="#f0f" />
        </g>
      ))}
      <g stroke="#0f0" fill="none" shapeRendering="crispEdges">
        <path d="M1137.500 295V596" />
        <path d="M1126 295.500h23M1126 445.500h23M1126 596.500h23" />
        <path d="m1129 288 16 15M1129 438l16 15M1129 589l16 15" />
        <path d="M859 611.500H1122M859.500 600v22M991.500 600v22M1122.500 600v22" />
        <path d="m852 619 16-16M984 619l16-16M1115 619l16-16" />
      </g>
      <g fill="#fff" fontFamily={cjk} fontSize="16">
        <text x="1161" y="232">角筋</text>
        <text x="1161" y="247">箍筋</text>
        <text x="1161" y="262">其它纵筋</text>
      </g>
      <g fill="#fff" fontFamily={mono} fontSize="13">
        <text x="1141" y="375">400</text>
        <text x="1141" y="526">400</text>
        <text x="913" y="631">350</text>
        <text x="1044" y="631">350</text>
      </g>
      <g fill="#0f0" fontFamily={mono} fontSize="13">
        <text x="1230" y="231">4C25</text>
        <text x="1229" y="245">C8@100/150</text>
        <text x="1230" y="260">8C25</text>
        <text x="975" y="289">4C25</text>
        <text transform="translate(853 461) rotate(-90)">7C25</text>
      </g>
    </svg>
  );
}

/* ---------- parts ---------- */

function Tool({ icon, label, caret, dim }: { icon: string; label?: string; caret?: boolean; dim?: boolean }) {
  return (
    <ToolButton $dim={dim} aria-label={label || icon}>
      <Icon name={icon} />
      {label}
      {caret && <Caret $dim={dim} />}
    </ToolButton>
  );
}

function NavTree() {
  return (
    <Tree>
      {tree.map((node, i) => (
        <React.Fragment key={node.label + i}>
          <TreeRow>
            <Icon name={node.open ? 'down' : 'right'} size={14} />
            <Dots />
            <RootLabel>
              <Icon name={node.open ? 'folderOpen' : 'folder'} />
              <Song>{node.label}</Song>
            </RootLabel>
          </TreeRow>
          {node.kids?.map(([label, icon, on], k) => (
            <TreeRow key={label}>
              <RootGuide />
              <Elbow $w={10} $last={k === node.kids!.length - 1} />
              <Leaf $on={on}>
                <Icon name={icon} />
                <Song>{label}</Song>
              </Leaf>
            </TreeRow>
          ))}
        </React.Fragment>
      ))}
    </Tree>
  );
}

function PropertyTable() {
  return (
    <Table>
      <thead>
        <tr>
          <Th $w={21} aria-label="序号" />
          <Th $w={191}><Song>属性名称</Song></Th>
          <Th $w={126} $on><Song>属性值</Song></Th>
          <Th $w={31}><Song>附加</Song></Th>
        </tr>
      </thead>
      <tbody>
        {props.map((p) => {
          const on = p.n === 15;
          return (
            <tr key={p.n}>
              <Td $center $bg={on ? '#ffd58c' : 'linear-gradient(#fcfcfc, #f0f0f0)'}><Song>{String(p.n)}</Song></Td>
              <Td $bg={on ? '#0078d7' : undefined}>
                <NameCell $tone={p.tone}>
                  {(p.kind === 'open' || p.kind === 'shut') && (
                    <Toggle aria-label={p.kind === 'open' ? '折叠' : '展开'}>
                      <svg width="11" height="11" viewBox="0 0 11 11">
                        <path d={p.kind === 'open' ? 'M2 5.500h7' : 'M2 5.500h7M5.500 2v7'} stroke="#000" />
                      </svg>
                    </Toggle>
                  )}
                  {(p.kind === 'kid' || p.kind === 'last') && <Branch $w={17} $last={p.kind === 'last'} />}
                  {!p.kind && <Indent />}
                  <NameText><Song>{p.name}</Song></NameText>
                </NameCell>
              </Td>
              <Td $bg={on ? '#d9eaf8' : undefined}>
                <ValueCell $dim={p.n === 6}>{p.value && <Value text={p.value} />}</ValueCell>
              </Td>
              <Td $center>{p.check && <Check type="checkbox" aria-label={`附加 ${p.name}`} />}</Td>
            </tr>
          );
        })}
      </tbody>
    </Table>
  );
}

function SectionDialog() {
  return (
    <Dialog>
      <DialogTitle>截面编辑</DialogTitle>
      <DialogBody>
        <DialogBar>
          <Grip />
          {['布角筋', '布边筋', '特殊布筋', '对齐钢筋', '画箍筋'].map((t) => <ToolButton key={t}>{t}</ToolButton>)}
          <Separator />
          {['修改纵筋', '修改箍筋', '编辑弯钩', '端头伸缩'].map((t) => <ToolButton key={t}>{t}</ToolButton>)}
          <ToolButton $dim>删除</ToolButton>
        </DialogBar>
        <DialogInfo>
          <Grip />
          <InfoLabel htmlFor="rebar">钢筋信息</InfoLabel>
          <InfoCombo>
            <BareSelect id="rebar" defaultValue="1C25"><option>1C25</option></BareSelect>
            <Caret $dim />
          </InfoCombo>
        </DialogInfo>
        <CanvasFrame><SectionDrawing /></CanvasFrame>
      </DialogBody>
      <DialogStatus>
        <StatusCell $w={148} $pad={8}><Song>(X: -152 Y: 712)</Song></StatusCell>
        <StatusCell>
          <ResizeGrip width="12" height="12" viewBox="0 0 12 12">
            <path d="M9 1h2M5 5h2M9 5h2M1 9h2M5 9h2M9 9h2" stroke="#aaa" strokeWidth="2" />
          </ResizeGrip>
        </StatusCell>
      </DialogStatus>
    </Dialog>
  );
}

export default function App() {
  return (
    <Page>
      <GlobalStyle />
      <svg width="0" height="0" style={{ position: 'absolute' }}>
        <linearGradient id="gold" x1="0" y1="0" x2="1" y2="1">
          <stop offset="0" stopColor="#fff3b8" />
          <stop offset="1" stopColor="#e3a021" />
        </linearGradient>
      </svg>

      <TitleBar>
        <Icon name="app" />
        <WindowTitle>广联达BIM钢筋算量软件 GGJ2013 - [C:\Users\Administrator.PC-20141127NRHM\Desktop\白龙村-20</WindowTitle>
        <WindowButtons>
          <PlainButton aria-label="最小化">
            <svg width="16" height="16" viewBox="0 0 16 16"><path d="M3 8.500h10" stroke="#888" /></svg>
          </PlainButton>
          <PlainButton aria-label="还原">
            <svg width="16" height="16" viewBox="0 0 16 16"><path d="M3.500 5.500h7v7h-7zM5.500 5V3.500h7v7H11" fill="none" stroke="#888" /></svg>
          </PlainButton>
          <PlainButton aria-label="关闭">
            <svg width="16" height="16" viewBox="0 0 16 16"><path d="m3 3 10 10M13 3 3 13" stroke="#888" /></svg>
          </PlainButton>
        </WindowButtons>
      </TitleBar>

      <MenuBar>
        <MenuItems>
          {menus.map((m) => <ToolButton key={m}>{m}</ToolButton>)}
          <ToolButton><Icon name="change" />新建变更<Caret /></ToolButton>
          <ToolButton><Icon name="mascot" />广小二</ToolButton>
        </MenuItems>
        <MenuBand><Notice href="#">图纸已经提取到已提取..</Notice></MenuBand>
        <MenuBand $grow>
          <ToolButton><Icon name="user" />13907298339<Caret /></ToolButton>
          <span>造价豆:0</span>
          <PlainButton aria-label="消息"><Icon name="bell" /></PlainButton>
          <MoreButton aria-label="更多"><More /></MoreButton>
        </MenuBand>
      </MenuBar>

      <ToolBar>
        <ToolSection $w={149}>
          <Tool icon="fresh" />
          <ToolButton aria-label="打开"><Icon name="open" /><Caret /></ToolButton>
          <Tool icon="save" />
          <Separator $tall />
          <ToolButton aria-label="撤销"><Icon name="undo" /><Caret /></ToolButton>
          <MoreButton aria-label="更多"><More /></MoreButton>
        </ToolSection>
        <ToolSection $w={546}>
          <Tool icon="draw" label="绘图" />
          <Tool icon="sigma" label="汇总计算" />
          <Tool icon="cloud" label="云检查" />
          <Tool icon="align" label="平齐板顶" dim />
          <Tool icon="binoc" label="查找图元" dim />
          <Tool icon="glasses" label="查看钢筋量" dim />
          <Tool icon="batch" label="批量选择" dim />
          <MoreButton aria-label="更多"><More /></MoreButton>
        </ToolSection>
        <ToolSection $flush>
          <ViewCombo $dim><Icon name="plane" />二维<Caret $dim /></ViewCombo>
          <Tool icon="cube" label="俯视" caret dim />
          <Tool icon="orbit" label="动态观察" dim />
          <Tool icon="part3d" label="局部三维" dim />
          <Separator />
          <Tool icon="full" label="全屏" dim />
          <Tool icon="zoom" label="缩放" caret dim />
          <Tool icon="pan" label="平移" caret dim />
          <Tool icon="rotate" label="屏幕旋转" caret dim />
          <Separator />
          <Tool icon="floors" label="选择楼层" dim />
          <MoreButton aria-label="更多"><More /></MoreButton>
        </ToolSection>
      </ToolBar>

      <Main>
        <NavPanel>
          <NavHeader>
            <Song>模块导航栏</Song>
            <NavTools>
              <PlainButton aria-label="固定"><Icon name="pin" /></PlainButton>
              <PlainButton aria-label="关闭"><Icon name="close" /></PlainButton>
            </NavTools>
          </NavHeader>
          <NavButton><Song>工程设置</Song></NavButton>
          <NavButton $on><Song>绘图输入</Song></NavButton>
          <NavStrip>
            <PlainButton aria-label="全部展开"><Icon name="pluses" /></PlainButton>
            <PlainButton aria-label="全部折叠"><Icon name="minuses" /></PlainButton>
          </NavStrip>
          <NavTree />
          <NavButton><Song>单构件输入</Song></NavButton>
          <NavButton><Song>报表预览</Song></NavButton>
        </NavPanel>

        <Workspace>
          <ComponentBar>
            <ToolSection $tight>
              <Tool icon="create" label="新建" caret />
              <Tool icon="cross" label="删除" />
              <Tool icon="copy" label="复制" />
              <Tool icon="rename" label="重命名" />
              <Separator />
              <label htmlFor="floor">楼层</label>
              <FloorSelect>
                <BareSelect id="floor" defaultValue="首层"><option>首层</option></BareSelect>
                <Caret />
              </FloorSelect>
              <Separator />
              <Tool icon="sort" label="排序" caret />
              <Tool icon="filter" label="过滤" caret />
              <Separator />
              <Tool icon="copyFloor" label="从其他楼层复制构件" />
              <Tool icon="copyFloor" />
            </ToolSection>
          </ComponentBar>
          <Panels>
            <ListPanel>
              <SearchRow>
                <SearchInput placeholder="搜索构件..." aria-label="搜索构件" />
                <PlainButton aria-label="搜索"><Icon name="search" /></PlainButton>
              </SearchRow>
              <ListBox>
                <ListItems>
                  {components.map((c, i) => (
                    <TreeRow key={c}>
                      <Elbow $w={9} $last={i === components.length - 1} />
                      <ListLeaf $on={c === 'KZ-60'}><Icon name="gear" size={12} /><Song>{c}</Song></ListLeaf>
                    </TreeRow>
                  ))}
                </ListItems>
                <Scrollbar>
                  <Icon name="up" />
                  <ScrollSpace $flex={255} />
                  <ScrollSpace $flex={270} $thumb />
                  <Icon name="down" />
                </Scrollbar>
              </ListBox>
            </ListPanel>
            <Editor>
              <TabStrip>
                <Tab><Song>属性编辑</Song></Tab>
                <TabRest />
              </TabStrip>
              <EditorBody>
                <EditorFrame>
                  <PropertyTable />
                  <Scrollbar>
                    <Icon name="up" />
                    <ScrollSpace $flex={458} $thumb />
                    <ScrollSpace $flex={70} />
                    <Icon name="down" />
                  </Scrollbar>
                </EditorFrame>
              </EditorBody>
            </Editor>
          </Panels>
        </Workspace>
      </Main>

      <StatusBar>
        <StatusCell $w={148} />
        <StatusCell $w={78}><Song>层高:4.5m</Song></StatusCell>
        <StatusCell $w={98}><Song>底标高:-0.05m</Song></StatusCell>
        <StatusCell $w={48}><Song>0</Song></StatusCell>
        <StatusCell />
        <StatusCell $w={70} $pad={1}><Song>106.8 FPS</Song></StatusCell>
      </StatusBar>

      <TaskBar>
        <StartButton aria-label="开始"><FaWindows size={18} /></StartButton>
        <TaskSearch>
          <svg width="22" height="22" viewBox="0 0 22 22"><circle cx="11" cy="11" r="9" fill="none" stroke="#fff" strokeWidth="2.500" /></svg>
          <TaskInput placeholder="在这里输入你要搜索的内容" aria-label="搜索" />
          <svg width="12" height="18" viewBox="0 0 12 18" fill="none" stroke="#999">
            <path d="M3.500 1.500h5v9h-5zM1 8v5h10V8M6 13v3M3.500 16.500h5" />
          </svg>
        </TaskSearch>
        <TaskTile aria-label="任务视图"><Icon name="taskview" size={20} /></TaskTile>
        <TaskTile aria-label="管理"><Icon name="pinwheel" size={22} /></TaskTile>
        <TaskTile aria-label="浏览器"><Icon name="browser" size={22} /></TaskTile>
        <TaskTile aria-label="广联达"><Icon name="swirl" size={20} /></TaskTile>
        <TaskTile as="span" $w={22}><Rule /></TaskTile>
        <TaskTile $w={54} aria-label="Edge"><Icon name="edge" size={22} /></TaskTile>
        <TaskTile $w={46} aria-label="Internet Explorer"><Icon name="ie" size={24} /></TaskTile>
        <TaskTile aria-label="文件"><Icon name="files" size={22} /></TaskTile>
        <OpenTiles>
          <TaskTile $open $w={40} aria-label="广联达云"><Icon name="swirlBlue" size={24} /></TaskTile>
          <TaskTile $open $w={40} aria-label="安全浏览器"><Icon name="greenE" size={22} /></TaskTile>
          <TaskTile $open $on $w={48} aria-label="钢筋算量"><Icon name="app" size={24} /></TaskTile>
        </OpenTiles>
        <Tray>
          <Rule />
          <TrayText>链接</TrayText>
          <TrayText $w={66}>{'34%\nCPU使用'}</TrayText>
          <Icon name="chevUp" size={14} />
          <Icon name="plug" />
          <Icon name="wifi" size={14} />
          <Icon name="speaker" />
          <svg width="23" height="13" viewBox="0 0 23 13" fill="none" stroke="#fff">
            <path d="M.5.500h22v12H.500z" />
            <path d="M3 3.500h17M3 6.500h17" strokeDasharray="2 1" />
            <path d="M5 9.500h13" />
          </svg>
          <TrayText>英</TrayText>
          <Icon name="sogou" />
          <TrayText $w={72}>{'18:09\n2018/4/9'}</TrayText>
          <Icon name="note" />
          <DesktopEdge />
        </Tray>
      </TaskBar>

      <SectionDialog />

      <GreenBall />
      <ImeBar>
        <ImeLogo><Icon name="sogou" size={28} /></ImeLogo>
        <ImeText>英</ImeText>
        <svg width="12" height="12" viewBox="0 0 12 12">
          <circle cx="3" cy="4" r="2" fill="#1c70c8" />
          <path d="M9 6q2 3-1 5" fill="none" stroke="#1c70c8" strokeWidth="2" />
        </svg>
        <FaRegSmile size={15} />
        <FaMicrophone size={14} />
        <FaKeyboard size={16} />
        <Icon name="person" />
        <FaTshirt size={15} />
        <FaWrench size={14} />
      </ImeBar>
    </Page>
  );
}
